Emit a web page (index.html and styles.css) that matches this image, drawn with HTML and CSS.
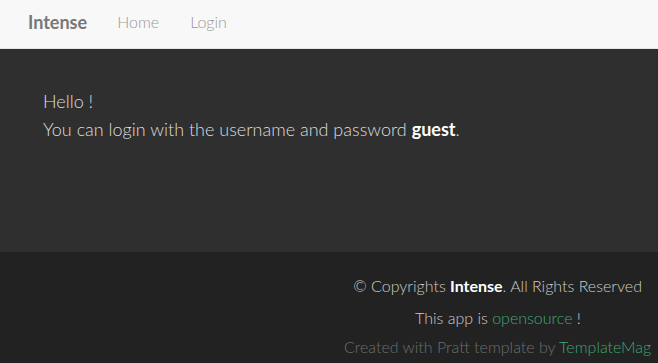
FILE: index.html
```html
<!DOCTYPE html>
<html>
<head>
<meta charset="utf-8">
<link rel="stylesheet" href="styles.css">
</head>
<body>
<nav class="navbar">
  <a class="brand" href="#">Intense</a>
  <a class="nav-link" href="#">Home</a>
  <a class="nav-link" href="#">Login</a>
</nav>
<main class="main">
  <p>Hello !</p>
  <p>You can login with the username and password <b>guest</b>.</p>
</main>
<footer class="footer">
  <div class="col">
    <p class="copy">© Copyrights <b>Intense</b>. All Rights Reserved</p>
    <p class="center">This app is <a href="#">opensource</a> !</p>
    <p class="credit">Created with Pratt template by <a href="#">TemplateMag</a></p>
  </div>
</footer>
</body>
</html>
```
FILE: styles.css
```css
html, body {
  margin: 0;
  padding: 0;
}
body {
  font-family: Lato, "Open Sans", sans-serif;
  font-weight: 300;
  background: #222222;
  height: 363px;
  overflow: hidden;
}
.navbar {
  height: 49px;
  box-sizing: border-box;
  background: #f8f8f8;
  border-bottom: 1px solid #e7e7e7;
  display: flex;
  align-items: center;
  padding-left: 28px;
  padding-bottom: 5px;
}
.navbar a {
  text-decoration: none;
}
.brand {
  font-size: 18px;
  font-weight: 700;
  color: #777777;
  margin-right: 30px;
}
.nav-link {
  font-size: 16px;
  color: #999999;
  font-weight: 300;
  margin-right: 31px;
}
.main {
  background: #2f2f2f;
  height: 203px;
  box-sizing: border-box;
  padding: 38px 43px;
  color: #dddddd;
  font-size: 18px;
}
.main p {
  margin: 0;
  line-height: 28px;
}
.main b {
  color: #ffffff;
  font-weight: 700;
}
.footer {
  display: flex;
  justify-content: flex-end;
  padding-top: 20px;
}
.col {
  width: 314px;
  display: flex;
  flex-direction: column;
  font-size: 16px;
  color: #cccccc;
}
.col p {
  margin: 0;
  line-height: 28px;
}
.copy {
  text-align: right;
  padding-right: 16px;
}
.copy b {
  color: #ffffff;
  font-weight: 700;
}
.center {
  text-align: center;
  margin-top: 4px !important;
  padding-right: 6px;
}
.credit {
  text-align: right;
  color: #6e6e6e;
  padding-right: 7px;
  white-space: nowrap;
  margin-top: 1px !important;
}
.col a {
  color: #3da873;
  text-decoration: none;
}
```
